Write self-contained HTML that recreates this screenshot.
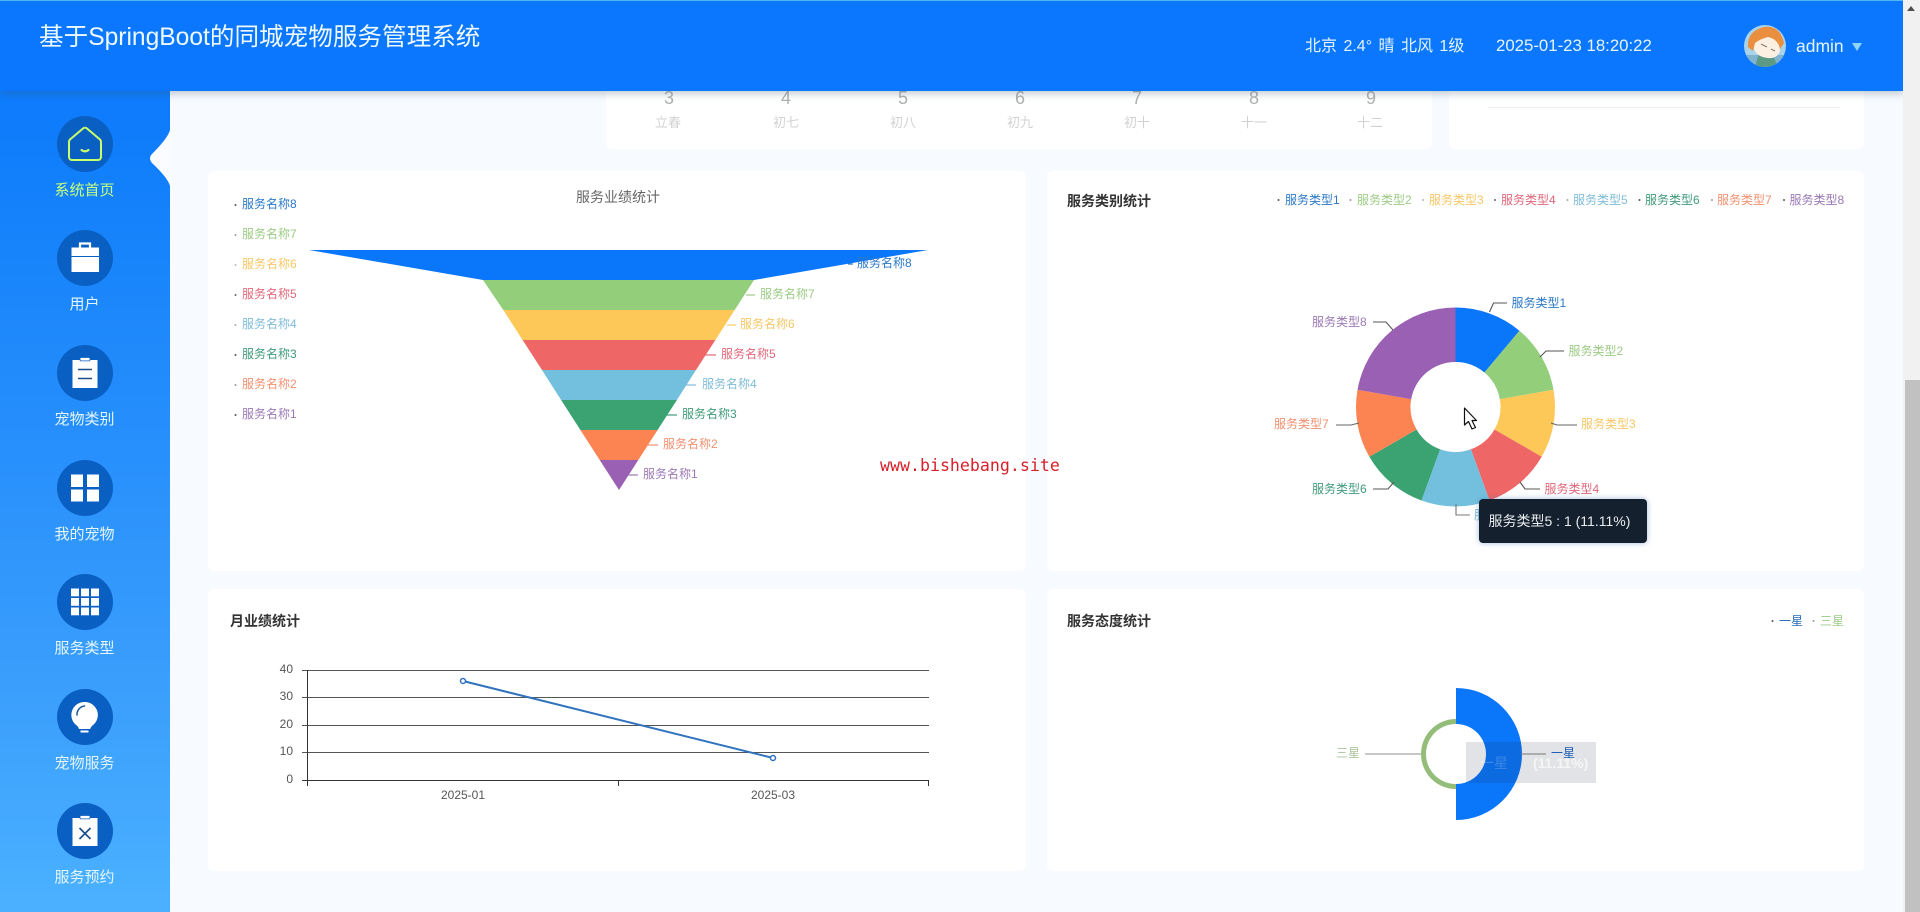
<!DOCTYPE html>
<html lang="zh-CN">
<head>
<meta charset="utf-8">
<title>基于SpringBoot的同城宠物服务管理系统</title>
<style>
html,body{margin:0;padding:0;width:1920px;height:912px;overflow:hidden;background:#f7fafe;font-family:"Liberation Sans","Noto Sans CJK SC",sans-serif}
body{filter:blur(.35px)}
.abs{position:absolute}
#header{left:0;top:0;width:1903px;height:91px;background:#0a77fe;border-top:1px solid #52b6ee;box-sizing:border-box;box-shadow:0 3px 7px rgba(60,90,110,.3);z-index:5}
#header div{position:absolute;white-space:nowrap;color:#e4f4ff}
#title{left:39px;top:19px;font-size:24.6px;line-height:36px;color:#eef9ff!important}
#weather{left:1305px;top:34px;font-size:16px;line-height:24px;word-spacing:2px}
#clock{left:1496px;top:33px;font-size:16.8px;line-height:24px}
#admin{left:1796px;top:33px;font-size:17.5px;line-height:24px}
#side{left:0;top:0;width:170px;height:912px;background:linear-gradient(180deg,#0a77fe 0,#0f7dfb 15%,#3a9efc 75%,#4bb1ff 100%);z-index:2}
.item{position:absolute;left:0;width:170px;height:90px;text-align:center}
.item .c{position:absolute;left:57px;top:0;width:56px;height:56px;border-radius:50%;background:#0a5fc2}
.item .c svg{display:block}
.item span{position:absolute;left:0;width:169px;top:65px;font-size:15px;line-height:20px;color:#e4f6ff}
.card{position:absolute;background:#fff;border-radius:6px}
#scroll{left:1903px;top:0;width:17px;height:912px;background:#f1f1f1;z-index:6}
#thumb{left:2px;top:380px;width:15px;height:532px;background:#c1c1c1;position:absolute}
#arrow{position:absolute;left:4px;top:6px;width:0;height:0;border-left:4px solid transparent;border-right:4px solid transparent;border-bottom:5px solid #505050}
#tip{left:1478.5px;top:499px;width:168px;height:44px;background:#14202e;border-radius:4px;color:#e8ecef;font-size:14px;line-height:44px;box-sizing:border-box;padding-left:10px;white-space:nowrap;box-shadow:0 0 6px rgba(80,130,190,.55);z-index:4}
#mark{left:880px;top:456px;font-family:"DejaVu Sans Mono",monospace;font-size:16.6px;line-height:20px;color:#d8202a;white-space:nowrap;z-index:4}
svg text{font-family:"Liberation Sans","Noto Sans CJK SC",sans-serif}
#charts{left:0;top:0;z-index:3}
</style>
</head>
<body>
<div class="card" style="left:606px;top:60px;width:826px;height:89px"></div>
<div class="card" style="left:1449px;top:60px;width:415px;height:89px"></div>
<div class="card" style="left:208px;top:171px;width:818px;height:400px"></div>
<div class="card" style="left:1047px;top:171px;width:817px;height:400px"></div>
<div class="card" style="left:208px;top:589px;width:818px;height:282px"></div>
<div class="card" style="left:1047px;top:589px;width:817px;height:282px"></div>

<svg id="charts" class="abs" width="1920" height="912" viewBox="0 0 1920 912">
  <!-- calendar -->
  <g text-anchor="middle" font-size="18" fill="#b0b0b0">
    <text x="669" y="104">3</text><text x="786" y="104">4</text><text x="903" y="104">5</text><text x="1020" y="104">6</text><text x="1137" y="104">7</text><text x="1254" y="104">8</text><text x="1371" y="104">9</text>
  </g>
  <g text-anchor="middle" font-size="13" fill="#d2d2d2">
    <text x="668" y="127">立春</text><text x="786" y="127">初七</text><text x="903" y="127">初八</text><text x="1020" y="127">初九</text><text x="1137" y="127">初十</text><text x="1254" y="127">十一</text><text x="1370" y="127">十二</text>
  </g>
  <line x1="1488" y1="107.500" x2="1840" y2="107.500" stroke="#ebedf0"/>

  <!-- funnel -->
  <text x="618" y="202" text-anchor="middle" font-size="14" fill="#666">服务业绩统计</text>
  <polygon points="309,250 928,250 754,280 483,280" fill="#0a76fa"/>
  <polygon points="483,280 754,280 734.700,310 503.300,310" fill="#93ce7a"/>
  <polygon points="503.300,310 734.700,310 715.400,340 522.600,340" fill="#fdc858"/>
  <polygon points="522.600,340 715.400,340 696,370 542,370" fill="#ee6666"/>
  <polygon points="542,370 696,370 676.900,400 561.100,400" fill="#73c0de"/>
  <polygon points="561.100,400 676.900,400 657.600,430 580.400,430" fill="#3ba272"/>
  <polygon points="580.400,430 657.600,430 638.300,460 599.700,460" fill="#fc8452"/>
  <polygon points="599.700,460 638.300,460 619,490" fill="#9a60b4"/>
  <g font-size="12">
    <g>
      <circle cx="235.500" cy="205" r="1" fill="#555"/><text x="242" y="208" fill="#2a78c8">服务名称8</text>
      <circle cx="235.500" cy="235" r="1" fill="#999"/><text x="242" y="238" fill="#9ccb85">服务名称7</text>
      <circle cx="235.500" cy="265" r="1" fill="#bbb"/><text x="242" y="268" fill="#f6c766">服务名称6</text>
      <circle cx="235.500" cy="295" r="1" fill="#666"/><text x="242" y="298" fill="#e0677a">服务名称5</text>
      <circle cx="235.500" cy="325" r="1" fill="#aaa"/><text x="242" y="328" fill="#7fbcd8">服务名称4</text>
      <circle cx="235.500" cy="355" r="1" fill="#555"/><text x="242" y="358" fill="#3f9a78">服务名称3</text>
      <circle cx="235.500" cy="385" r="1" fill="#999"/><text x="242" y="388" fill="#f19070">服务名称2</text>
      <circle cx="235.500" cy="415" r="1" fill="#555"/><text x="242" y="418" fill="#9a78b4">服务名称1</text>
    </g>
    <text x="857" y="267" fill="#2a78c8">服务名称8</text>
    <text x="760" y="298" fill="#9ccb85">服务名称7</text>
    <text x="740" y="328" fill="#f6c766">服务名称6</text>
    <text x="721" y="358" fill="#e0677a">服务名称5</text>
    <text x="702" y="388" fill="#7fbcd8">服务名称4</text>
    <text x="682" y="418" fill="#3f9a78">服务名称3</text>
    <text x="663" y="448" fill="#f19070">服务名称2</text>
    <text x="643" y="478" fill="#9a78b4">服务名称1</text>
    <g stroke-width="1.200">
      <line x1="848" y1="264" x2="853" y2="264" stroke="#2a78c8"/>
      <line x1="746" y1="295" x2="755" y2="295" stroke="#9ccb85"/>
      <line x1="727" y1="325" x2="736" y2="325" stroke="#f6c766"/>
      <line x1="705" y1="355" x2="716" y2="355" stroke="#e0677a"/>
      <line x1="685" y1="385" x2="696" y2="385" stroke="#7fbcd8"/>
      <line x1="667" y1="415" x2="677" y2="415" stroke="#3f9a78"/>
      <line x1="647" y1="445" x2="658" y2="445" stroke="#f19070"/>
      <line x1="628" y1="475" x2="638" y2="475" stroke="#9a78b4"/>
    </g>
  </g>

  <!-- pie card -->
  <text x="1067" y="206" font-size="14" font-weight="700" fill="#333">服务类别统计</text>
  <g font-size="12">
    <circle cx="1278.500" cy="200" r="1" fill="#555"/><text x="1285" y="204" fill="#2a78c8">服务类型1</text>
    <circle cx="1350.500" cy="200" r="1" fill="#999"/><text x="1357" y="204" fill="#9ccb85">服务类型2</text>
    <circle cx="1423" cy="200" r="1" fill="#bbb"/><text x="1429" y="204" fill="#f6c766">服务类型3</text>
    <circle cx="1495" cy="200" r="1" fill="#666"/><text x="1501" y="204" fill="#e0677a">服务类型4</text>
    <circle cx="1567.500" cy="200" r="1" fill="#aaa"/><text x="1573" y="204" fill="#7fbcd8">服务类型5</text>
    <circle cx="1639.500" cy="200" r="1" fill="#555"/><text x="1645" y="204" fill="#3f9a78">服务类型6</text>
    <circle cx="1712" cy="200" r="1" fill="#999"/><text x="1717" y="204" fill="#f19070">服务类型7</text>
    <circle cx="1784" cy="200" r="1" fill="#555"/><text x="1789.500" y="204" fill="#9a78b4">服务类型8</text>
  </g>
  <g transform="translate(1455.500,407)">
    <path d="M0 -45L0 -99.500A99.500 99.500 0 0 1 63.960 -76.220L28.930 -34.470A45 45 0 0 0 0 -45Z" fill="#0a76fa"/>
    <path d="M28.930 -34.470L63.960 -76.220A99.500 99.500 0 0 1 97.990 -17.270L44.320 -7.810A45 45 0 0 0 28.930 -34.470Z" fill="#93ce7a"/>
    <path d="M44.320 -7.810L97.990 -17.270A99.500 99.500 0 0 1 86.170 49.750L38.970 22.500A45 45 0 0 0 44.320 -7.810Z" fill="#fdc858"/>
    <path d="M38.970 22.500L86.170 49.750A99.500 99.500 0 0 1 34.030 93.500L15.390 42.290A45 45 0 0 0 38.970 22.500Z" fill="#ee6666"/>
    <path d="M15.390 42.290L34.030 93.500A99.500 99.500 0 0 1 -34.030 93.500L-15.390 42.290A45 45 0 0 0 15.390 42.290Z" fill="#73c0de"/>
    <path d="M-15.390 42.290L-34.030 93.500A99.500 99.500 0 0 1 -86.170 49.750L-38.970 22.500A45 45 0 0 0 -15.390 42.290Z" fill="#3ba272"/>
    <path d="M-38.970 22.500L-86.170 49.750A99.500 99.500 0 0 1 -97.990 -17.270L-44.320 -7.810A45 45 0 0 0 -38.970 22.500Z" fill="#fc8452"/>
    <path d="M-44.320 -7.810L-97.990 -17.270A99.500 99.500 0 0 1 0 -99.500L0 -45A45 45 0 0 0 -44.320 -7.810Z" fill="#9a60b4"/>
  </g>
  <g fill="none" stroke-width="1.100">
    <path d="M1489.500 312L1493.500 303H1507" stroke="#555"/>
    <path d="M1540 357L1546 351H1564" stroke="#555"/>
    <path d="M1551 423L1557 425H1577" stroke="#666"/>
    <path d="M1520 482L1525 489H1540" stroke="#555"/>
    <path d="M1456 504V515H1470" stroke="#777"/>
    <path d="M1394 482L1388 489H1373" stroke="#555"/>
    <path d="M1359 423L1351 425H1336" stroke="#666"/>
    <path d="M1393 330L1386 322H1373" stroke="#555"/>
  </g>
  <g font-size="12">
    <text x="1511.500" y="307" fill="#2a78c8">服务类型1</text>
    <text x="1568.500" y="355" fill="#9ccb85">服务类型2</text>
    <text x="1581" y="428" fill="#f6c766">服务类型3</text>
    <text x="1544.500" y="493" fill="#e0677a">服务类型4</text>
    <text x="1474" y="519" fill="#7fbcd8">服务类型5</text>
    <text x="1312" y="493" fill="#3f9a78">服务类型6</text>
    <text x="1274" y="428" fill="#f19070">服务类型7</text>
    <text x="1312" y="326" fill="#9a78b4">服务类型8</text>
  </g>
  <path d="M1464.500 408V425L1468.500 421.500L1472 429L1475.500 427.500L1472 420.500H1476.500Z" fill="#fff" stroke="#111" stroke-width="1.200" stroke-linejoin="round"/>

  <!-- line chart -->
  <text x="230" y="626" font-size="14" font-weight="700" fill="#333">月业绩统计</text>
  <g stroke="#555" stroke-width="1">
    <line x1="302" y1="670.500" x2="929" y2="670.500"/>
    <line x1="302" y1="697.500" x2="929" y2="697.500"/>
    <line x1="302" y1="725.500" x2="929" y2="725.500"/>
    <line x1="302" y1="752.500" x2="929" y2="752.500"/>
  </g>
  <g stroke="#333" stroke-width="1">
    <line x1="302" y1="780.500" x2="929" y2="780.500"/>
    <line x1="307.500" y1="670" x2="307.500" y2="786"/>
    <line x1="618.500" y1="780" x2="618.500" y2="786"/>
    <line x1="928.500" y1="780" x2="928.500" y2="786"/>
  </g>
  <g font-size="12" fill="#555" text-anchor="end">
    <text x="293" y="673">40</text><text x="293" y="700">30</text><text x="293" y="728">20</text><text x="293" y="755">10</text><text x="293" y="783">0</text>
  </g>
  <g font-size="12" fill="#555" text-anchor="middle">
    <text x="463" y="799">2025-01</text><text x="773" y="799">2025-03</text>
  </g>
  <line x1="463" y1="681" x2="773" y2="758" stroke="#2f72bd" stroke-width="2"/>
  <circle cx="463" cy="681" r="2.500" fill="#fff" stroke="#2f72bd" stroke-width="1.500"/>
  <circle cx="773" cy="758" r="2.500" fill="#fff" stroke="#2f72bd" stroke-width="1.500"/>

  <!-- rose chart -->
  <text x="1067" y="626" font-size="14" font-weight="700" fill="#333">服务态度统计</text>
  <g font-size="12">
    <circle cx="1772.500" cy="621" r="1" fill="#555"/><text x="1779" y="625" fill="#2a6cb8">一星</text>
    <circle cx="1813.500" cy="621" r="1" fill="#999"/><text x="1820" y="625" fill="#9ccb85">三星</text>
  </g>
  <path d="M1456 688A66 66 0 0 1 1456 820V784A30 30 0 0 0 1456 724Z" fill="#0a76fa"/>
  <path d="M1456 719A35 35 0 0 0 1456 789V784A30 30 0 0 1 1456 724Z" fill="#93bd78"/>
  <rect x="1466" y="742" width="130" height="41" fill="#1e283c" fill-opacity=".13"/>
  <text x="1480" y="768" font-size="14" fill="#fff" fill-opacity=".2">一星</text>
  <text x="1533" y="768" font-size="14" font-weight="700" fill="#fff" fill-opacity=".65">(11.11%)</text>
  <line x1="1365" y1="754" x2="1421" y2="754" stroke="#a8a8a8" stroke-width="1.200"/>
  <line x1="1521" y1="754" x2="1546" y2="754" stroke="#8a8a8a" stroke-width="1.200"/>
  <text x="1336" y="757" font-size="12" fill="#a9c39a">三星</text>
  <text x="1551" y="757" font-size="12" fill="#1a5fb4">一星</text>
</svg>

<div id="mark" class="abs">www.bishebang.site</div>
<div id="tip" class="abs">服务类型5 : 1 (11.11%)</div>

<div id="side" class="abs">
  <div class="item" style="top:116px">
    <div class="c"><svg width="56" height="56" viewBox="0 0 56 56"><path d="M26 12.500a3 3 0 0 1 4 0L43 23.500a3 3 0 0 1 1 2.300V41a3 3 0 0 1-3 3H15a3 3 0 0 1-3-3V25.800a3 3 0 0 1 1-2.300Z" fill="none" stroke="#c8ff6a" stroke-width="2"/><path d="M24.500 34q3.500 2.800 7 0" fill="none" stroke="#c8ff6a" stroke-width="2.200" stroke-linecap="round"/></svg></div>
    <span style="color:#c6ff78">系统首页</span>
  </div>
  <div class="item" style="top:230px">
    <div class="c"><svg width="56" height="56" viewBox="0 0 56 56"><path d="M23 18v-4.500h10V18" fill="none" stroke="#fff" stroke-width="2.200"/><rect x="14.500" y="17.500" width="27.500" height="8.500" fill="#fff"/><rect x="14.500" y="27" width="27.500" height="15" fill="#fff"/></svg></div>
    <span>用户</span>
  </div>
  <div class="item" style="top:345px">
    <div class="c"><svg width="56" height="56" viewBox="0 0 56 56"><rect x="15.500" y="15" width="25" height="28" fill="#fff"/><rect x="23" y="12.500" width="10" height="3.400" rx="1" fill="#fff" stroke="#0a5fc2" stroke-width=".8"/><path d="M21 24.500h14M21 33.500h14" stroke="#1c4f88" stroke-width="1.600"/></svg></div>
    <span>宠物类别</span>
  </div>
  <div class="item" style="top:460px">
    <div class="c"><svg width="56" height="56" viewBox="0 0 56 56"><rect x="14" y="14.500" width="12" height="12.500" fill="#fff"/><rect x="30" y="14.500" width="12" height="12.500" fill="#fff"/><rect x="14" y="29.500" width="12" height="12" fill="#fff"/><rect x="30" y="29.500" width="12" height="12" fill="#fff"/></svg></div>
    <span>我的宠物</span>
  </div>
  <div class="item" style="top:574px">
    <div class="c"><svg width="56" height="56" viewBox="0 0 56 56"><g fill="#fff"><rect x="14" y="14.500" width="8" height="7.800"/><rect x="24" y="14.500" width="8" height="7.800"/><rect x="34" y="14.500" width="8" height="7.800"/><rect x="14" y="24" width="8" height="7.800"/><rect x="24" y="24" width="8" height="7.800"/><rect x="34" y="24" width="8" height="7.800"/><rect x="14" y="33.500" width="8" height="7.800"/><rect x="24" y="33.500" width="8" height="7.800"/><rect x="34" y="33.500" width="8" height="7.800"/></g></svg></div>
    <span>服务类型</span>
  </div>
  <div class="item" style="top:689px">
    <div class="c"><svg width="56" height="56" viewBox="0 0 56 56"><path d="M27.500 13a13 13 0 0 1 8 23.500c-1.500 1.200-2 2.500-2.300 3.500H22c-.3-1-.8-2.300-2.300-3.500a13 13 0 0 1 7.800-23.500Z" fill="#fff"/><rect x="23.500" y="41.500" width="8" height="2" fill="#fff"/><path d="M20 26c-.3-4.500 3-8.500 7.500-9" fill="none" stroke="#1c5796" stroke-width="1.500" stroke-linecap="round"/></svg></div>
    <span>宠物服务</span>
  </div>
  <div class="item" style="top:803px">
    <div class="c"><svg width="56" height="56" viewBox="0 0 56 56"><rect x="15.500" y="15" width="25" height="28" fill="#fff"/><rect x="23" y="12.500" width="10" height="3.400" rx="1" fill="#fff" stroke="#0a5fc2" stroke-width=".8"/><path d="M22.500 25l11 11M33.500 25l-11 11" stroke="#1c4f88" stroke-width="1.700"/></svg></div>
    <span>服务预约</span>
  </div>
  <svg class="abs" style="left:140px;top:120px" width="30" height="76" viewBox="0 0 30 76"><path d="M30 10Q28 18 12 34Q8 38 12 43Q28 58 30 66Z" fill="#fbfcff"/></svg>
</div>

<div id="header" class="abs">
  <div id="title">基于SpringBoot的同城宠物服务管理系统</div>
  <div id="weather">北京 2.4° 晴 北风 1级</div>
  <div id="clock">2025-01-23 18:20:22</div>
  <svg class="abs" style="left:1744px;top:24px" width="42" height="42" viewBox="0 0 42 42">
    <defs><clipPath id="av"><circle cx="21" cy="21" r="21"/></clipPath></defs>
    <g clip-path="url(#av)">
      <rect width="42" height="42" fill="#a9d3ea"/>
      <rect y="30" width="42" height="12" fill="#7fb3cf"/>
      <path d="M11 42L15 28L28 28L34 42Z" fill="#5c9a86"/>
      <path d="M9 16Q14 10 26 12Q36 16 36 26Q33 34 24 33Q13 32 10 24Z" fill="#fbf0e2"/>
      <path d="M4 22Q3 6 20 2Q36 0 40 18L36 24Q34 14 24 12Q16 14 11 18L9 26Z" fill="#e98f3f"/>
      <path d="M17 19l6 3M27 24l4 2" stroke="#6a5a4c" stroke-width=".9"/>
    </g>
  </svg>
  <div id="admin">admin</div>
  <div style="left:1852px;top:42px;width:0;height:0;border-left:5px solid transparent;border-right:5px solid transparent;border-top:8px solid #8fd4ff"></div>
</div>

<div id="scroll" class="abs"><div id="arrow"></div><div id="thumb"></div></div>
</body>
</html>
